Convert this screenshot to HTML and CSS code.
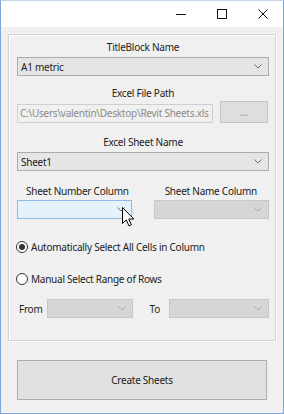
FILE: index.html
```html
<!DOCTYPE html>
<html>
<head>
<meta charset="utf-8">
<link rel="stylesheet" href="styles.css">
</head>
<body>
<div class="window">
  <div class="titlebar">
    <div class="tbtn"><svg width="10" height="10" viewBox="0 0 10 10"><path d="M0 5.5H10" stroke="#111" stroke-width="1"/></svg></div>
    <div class="tbtn"><svg width="10" height="10" viewBox="0 0 10 10"><rect x="0.5" y="0.5" width="9" height="9" fill="none" stroke="#111" stroke-width="1"/></svg></div>
    <div class="tbtn"><svg width="10" height="10" viewBox="0 0 10 10"><path d="M0.5 0.5L9.5 9.5M9.5 0.5L0.5 9.5" stroke="#111" stroke-width="1"/></svg></div>
  </div>
  <div class="client">
    <div class="group">
      <div class="label center l1">TitleBlock Name</div>
      <div class="combo c1"><span class="val">A1 metric</span><svg class="chev" width="8" height="5" viewBox="0 0 8 5"><path d="M0.5 0.5L4 4L7.5 0.5" fill="none" stroke="#6b6b6b" stroke-width="1"/></svg></div>
      <div class="label center l2">Excel File Path</div>
      <div class="pathrow">
        <div class="textbox">C:\Users\valentin\Desktop\Revit Sheets.xls</div>
        <div class="dots">...</div>
      </div>
      <div class="label center l3">Excel Sheet Name</div>
      <div class="combo c2"><span class="val">Sheet1</span><svg class="chev" width="8" height="5" viewBox="0 0 8 5"><path d="M0.5 0.5L4 4L7.5 0.5" fill="none" stroke="#6b6b6b" stroke-width="1"/></svg></div>
      <div class="colrow labels">
        <div class="label collabel">Sheet Number Column</div>
        <div class="label collabel">Sheet Name Column</div>
      </div>
      <div class="colrow combos">
        <div class="combo focus half"><svg class="chev" width="8" height="5" viewBox="0 0 8 5"><path d="M0.5 0.5L4 4L7.5 0.5" fill="none" stroke="#6b6b6b" stroke-width="1"/></svg></div>
        <div class="combo disabled half"><svg class="chev" width="8" height="5" viewBox="0 0 8 5"><path d="M0.5 0.5L4 4L7.5 0.5" fill="none" stroke="#a8a8a8" stroke-width="1"/></svg></div>
      </div>
      <div class="radio r1"><span class="dot checked"></span><span class="label">Automatically Select All Cells in Column</span></div>
      <div class="radio r2"><span class="dot"></span><span class="label">Manual Select Range of Rows</span></div>
      <div class="rangerow">
        <span class="label from">From</span>
        <div class="combo disabled small"><svg class="chev" width="8" height="5" viewBox="0 0 8 5"><path d="M0.5 0.5L4 4L7.5 0.5" fill="none" stroke="#a8a8a8" stroke-width="1"/></svg></div>
        <span class="label to">To</span>
        <div class="combo disabled wide"><svg class="chev" width="8" height="5" viewBox="0 0 8 5"><path d="M0.5 0.5L4 4L7.5 0.5" fill="none" stroke="#a8a8a8" stroke-width="1"/></svg></div>
      </div>
    </div>
    <div class="create">Create Sheets</div>
  </div>
  <svg class="cursor" width="13" height="20" viewBox="0 0 13 20"><path d="M0.5 0.5V16.5L4.3 12.9L6.9 18.8L9.3 17.8L6.8 12H11.8Z" fill="#fff" stroke="#000" stroke-width="1" stroke-linejoin="round"/></svg>
</div>
</body>
</html>
```

FILE: styles.css
```css
* { box-sizing: border-box; }
html, body { margin: 0; padding: 0; }
body {
  font-family: "Noto Sans", "Open Sans", sans-serif;
  font-size: 10px;
  letter-spacing: -0.25px;
  color: #222222;
  background: #ffffff;
}
.window {
  position: relative;
  width: 284px;
  height: 414px;
  border: 1px solid #7fa6d6;
  border-top-color: #c5d6ea;
  background: #f0f0f0;
  display: flex;
  flex-direction: column;
}
.titlebar {
  height: 26px;
  background: #ffffff;
  display: flex;
  justify-content: flex-end;
}
.tbtn {
  width: 41px;
  height: 26px;
  display: flex;
  align-items: center;
  justify-content: center;
}
.tbtn svg { display: block; }
.client {
  flex: 1;
  display: flex;
  flex-direction: column;
  padding: 7px 0 0 7px;
}
.group {
  width: 268px;
  height: 307px;
  border: 1px solid #d5d5d5;
  box-shadow: inset 1px 1px 0 #ffffff, 1px 1px 0 #ffffff;
  padding: 0 6px 0 8px;
  display: flex;
  flex-direction: column;
}
.label { line-height: 14px; white-space: nowrap; }
.center { text-align: center; }
.l1 { margin-top: 5px; }
.l2 { margin-top: 10px; }
.l3 { margin-top: 12px; }
.combo {
  position: relative;
  height: 19px;
  background: #e5e5e5;
  border: 1px solid #acacac;
  display: flex;
  align-items: center;
  padding-left: 3px;
}
.combo .chev { position: absolute; right: 6px; top: 6px; }
.c1 { margin-top: 3px; }
.c2 { margin-top: 3px; }
.combo.focus { background: #e5f1fb; border-color: #8dbbe8; }
.combo.disabled { background: #d6d6d6; border-color: #c8c8c8; }
.pathrow {
  margin-top: 1px;
  display: flex;
  align-items: flex-end;
  gap: 7px;
}
.textbox {
  width: 196px;
  height: 19px;
  border: 1px solid #cfcfcf;
  background: #f0f0f0;
  color: #8a8a8a;
  padding-left: 2px;
  line-height: 17px;
  white-space: nowrap;
  overflow: hidden;
}
.dots {
  width: 48px;
  height: 22px;
  border: 1px solid #c4c4c4;
  background: #dedede;
  color: #8a8a8a;
  display: flex;
  align-items: center;
  justify-content: center;
  line-height: 1;
}
.colrow { display: flex; justify-content: space-between; }
.labels { margin-top: 13px; padding: 0 12px 0 9px; }
.combos { margin-top: 2px; }
.half { width: 115px; }
.radio {
  display: flex;
  align-items: center;
  gap: 3px;
  margin-left: -1px;
}
.r1 { margin-top: 21px; }
.r2 { margin-top: 18px; }
.dot {
  width: 12px;
  height: 12px;
  border-radius: 50%;
  border: 1px solid #333;
  background: #fff;
  position: relative;
}
.dot.checked::after {
  content: "";
  position: absolute;
  left: 2px; top: 2px;
  width: 6px; height: 6px;
  border-radius: 50%;
  background: #333;
}
.rangerow {
  margin-top: 13px;
  display: flex;
  align-items: center;
}
.from { margin-left: 2px; width: 28px; }
.small { width: 86px; }
.to { margin-left: 17px; width: 20px; }
.wide { width: 100px; }
.create {
  margin: 19px 0 0 9px;
  width: 250px;
  height: 40px;
  background: #e1e1e1;
  border: 1px solid #adadad;
  display: flex;
  align-items: center;
  justify-content: center;
}
.cursor { position: absolute; left: 121px; top: 206px; }
```
